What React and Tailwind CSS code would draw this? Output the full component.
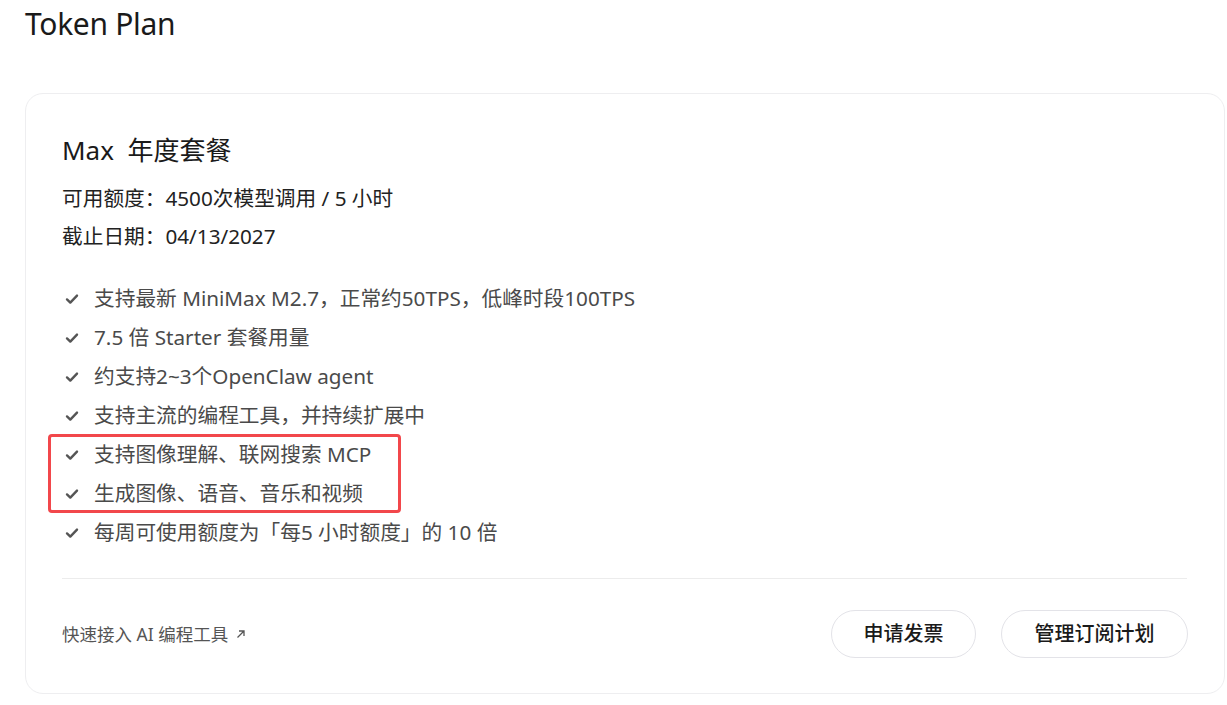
import React from 'react';

const font = { fontFamily: '"Noto Sans", "Noto Sans CJK SC", sans-serif' };

const features = [
    '支持最新 MiniMax M2.7，正常约50TPS，低峰时段100TPS',
    '7.5 倍 Starter 套餐用量',
    '约支持2~3个OpenClaw agent',
    '支持主流的编程工具，并持续扩展中',
    '支持图像理解、联网搜索 MCP',
    '生成图像、语音、音乐和视频',
    '每周可使用额度为「每5 小时额度」的 10 倍',
];

function Check() {
    return (
        <svg width="14" height="14" viewBox="0 0 14 14" className="shrink-0">
            <path d="M2 7.4 L5.3 10.6 L12 3.6" fill="none" stroke="#555" strokeWidth="2.4" strokeLinecap="round" strokeLinejoin="round" />
        </svg>
    );
}

export default function App() {
    return (
        <div className="px-[25px] bg-white min-h-[705px] text-[#1a1a1a]" style={font}>
            <h1 className="text-[30px] leading-[48px] font-normal tracking-[-0.3px]">Token Plan</h1>
            <div className="relative mt-[45px] w-[1200px] border border-[#eeeef0] rounded-[18px] px-[36px] pt-[38px] pb-[35px]">
                <div className="text-[26px] leading-[36px]">Max&nbsp; 年度套餐</div>
                <div className="mt-[11px] text-[20.7px] leading-[38px] text-[#222]">
                    <div>可用额度：4500次模型调用 / 5 小时</div>
                    <div>截止日期：04/13/2027</div>
                </div>
                <ul className="mt-[24px]">
                    {features.map((f) => (
                        <li key={f} className="flex items-center gap-[15px] pl-[3px] text-[20.7px] leading-[39px] text-[#4a4a4a]">
                            <Check />
                            <span>{f}</span>
                        </li>
                    ))}
                </ul>
                <div className="mt-[26px] h-px bg-[#ececec] mr-px" />
                <div className="flex items-center justify-between pt-[31px]">
                    <a className="flex items-center gap-[8px] text-[17.5px] text-[#555]">
                        快速接入 AI 编程工具
                        <svg width="10" height="10" viewBox="0 0 10 10">
                            <path d="M1.5 8.5 L8 2 M3 2 H8 V7" fill="none" stroke="#555" strokeWidth="1.3" />
                        </svg>
                    </a>
                    <div className="flex gap-[25px]">
                        <button className="w-[145px] h-[48px] rounded-full border border-[#e3e3e8] bg-white text-[20px] font-medium text-[#1a1a1a]">申请发票</button>
                        <button className="w-[187px] h-[48px] rounded-full border border-[#e3e3e8] bg-white text-[20px] font-medium text-[#1a1a1a]">管理订阅计划</button>
                    </div>
                </div>
                <div className="absolute left-[22px] top-[340px] w-[353px] h-[79px] border-[3px] border-[#f2474b] rounded-[4px] pointer-events-none" />
            </div>
        </div>
    );
}
